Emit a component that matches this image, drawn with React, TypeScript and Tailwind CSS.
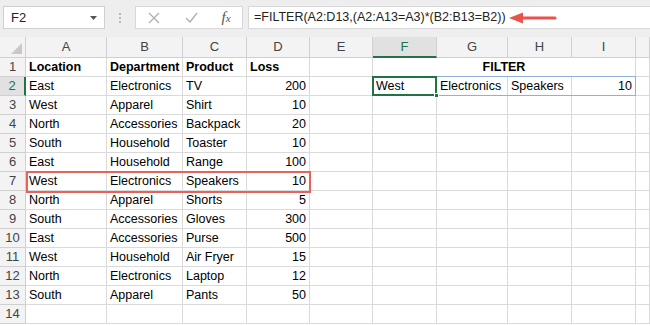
import React from 'react';

const cols = ['A', 'B', 'C', 'D', 'E', 'F', 'G', 'H', 'I', ''];

const data: (string | number)[][] = [
  ['East', 'Electronics', 'TV', 200],
  ['West', 'Apparel', 'Shirt', 10],
  ['North', 'Accessories', 'Backpack', 20],
  ['South', 'Household', 'Toaster', 10],
  ['East', 'Household', 'Range', 100],
  ['West', 'Electronics', 'Speakers', 10],
  ['North', 'Apparel', 'Shorts', 5],
  ['South', 'Accessories', 'Gloves', 300],
  ['East', 'Accessories', 'Purse', 500],
  ['West', 'Household', 'Air Fryer', 15],
  ['North', 'Electronics', 'Laptop', 12],
  ['South', 'Apparel', 'Pants', 50],
];

const cell = 'h-[19px] border-r border-b border-[#dadada] flex items-center px-[3px] whitespace-nowrap overflow-hidden';
const rowHead = 'h-[19px] border-r border-b border-[#d0d0d0] bg-[#f3f3f3] flex items-center justify-center text-[#444] text-[13px]';

function Row({ n, vals, bold }: { n: number; vals: (string | number | null)[]; bold?: boolean }) {
  return (
    <>
      <div className={n === 2 ? 'h-[19px] border-r-2 border-r-[#217346] border-b border-[#d0d0d0] bg-[#e1e1e1] flex items-center justify-center text-[#217346] text-[13px]' : rowHead}>{n}</div>
      {vals.map((v, i) => (
        <div key={i} className={`${cell} ${typeof v === 'number' ? 'justify-end' : ''} ${bold ? 'font-bold' : ''}`}>{v}</div>
      ))}
    </>
  );
}

export default function App() {
  return (
    <div className="w-[650px] h-[326px] overflow-hidden bg-white text-black" style={{ fontFamily: '"Liberation Sans", Arial, sans-serif' }}>
      {/* formula bar */}
      <div className="relative h-[37px] bg-[#eeeeee] flex items-start pt-[6px] pl-[3px]">
        <div className="w-[102px] h-[23px] bg-white border border-[#d0d0d0] flex items-center justify-between px-[7px] text-[13px] text-[#222]">
          <span>F2</span>
          <svg width="7" height="4" viewBox="0 0 7 4"><path d="M0 0h7L3.5 4z" fill="#555" /></svg>
        </div>
        <div className="w-[30px] h-[23px] flex flex-col items-center justify-center gap-[2px]">
          <span className="w-[2px] h-[2px] bg-[#b8b8b8]" />
          <span className="w-[2px] h-[2px] bg-[#b8b8b8]" />
          <span className="w-[2px] h-[2px] bg-[#b8b8b8]" />
        </div>
        <div className="w-[108px] h-[23px] bg-white border border-[#d8d8d8] flex items-center">
          <div className="w-[36px] flex justify-center">
            <svg width="12" height="12" viewBox="0 0 12 12"><path d="M1 1l10 10M11 1L1 11" stroke="#b0b0b0" strokeWidth="1.3" /></svg>
          </div>
          <div className="w-[38px] flex justify-center">
            <svg width="13" height="11" viewBox="0 0 13 11"><path d="M1 6l4 4 7-9" stroke="#b0b0b0" strokeWidth="1.4" fill="none" /></svg>
          </div>
          <div className="flex-1 flex justify-center italic text-[#555] text-[15px]" style={{ fontFamily: '"Liberation Serif", serif' }}>
            f<span className="text-[11px] mt-[4px]">x</span>
          </div>
        </div>
        <div className="ml-[5px] flex-1 h-[23px] bg-white border-l border-y border-[#d8d8d8] flex items-center pl-[5px] text-[12.5px] text-[#222]">
          =FILTER(A2:D13,(A2:A13=A3)*(B2:B13=B2))
        </div>
        <svg className="absolute left-[508px] top-[11px]" width="50" height="14" viewBox="0 0 50 14">
          <path d="M14 7H47" stroke="#e8534a" strokeWidth="3.2" strokeLinecap="round" />
          <path d="M1 7L15 1.5V12.5Z" fill="#e8534a" />
        </svg>
      </div>

      {/* grid */}
      <div className="relative">
        <div className="grid grid-cols-[26px_81px_76px_64px_63px_63px_64px_71px_64px_64px_1fr] text-[12.5px]">
          <div className="h-[21px] border-r border-b border-[#d0d0d0] bg-[#f3f3f3] relative">
            <svg className="absolute right-[3px] bottom-[3px]" width="11" height="11" viewBox="0 0 11 11"><path d="M11 0V11H0Z" fill="#c8c8c8" /></svg>
          </div>
          {cols.map((c, i) => (
            <div
              key={i}
              className={
                c === 'F'
                  ? 'h-[21px] border-r border-[#d0d0d0] border-b-2 border-b-[#217346] bg-[#e1e1e1] flex items-center justify-center text-[#217346] text-[13px]'
                  : 'h-[21px] border-r border-b border-[#d0d0d0] bg-[#f3f3f3] flex items-center justify-center text-[#444] text-[13px]'
              }
            >
              {c}
            </div>
          ))}

          {/* row 1 */}
          <div className={rowHead}>1</div>
          {['Location', 'Department', 'Product', 'Loss', ''].map((v, i) => (
            <div key={i} className={`${cell} font-bold`}>{v}</div>
          ))}
          <div className={`${cell} col-span-4 justify-center font-bold`}>FILTER</div>
          <div className={cell} />

          {data.map((r, i) => {
            const extra: (string | number | null)[] =
              i === 0 ? ['', 'West', 'Electronics', 'Speakers', 10, ''] : ['', '', '', '', '', ''];
            return <Row key={i} n={i + 2} vals={[...r, ...extra]} />;
          })}
          <Row n={14} vals={['', '', '', '', '', '', '', '', '', '']} />
        </div>

        {/* highlight around row 7 */}
        <div className="absolute left-[26px] top-[134px] w-[285px] h-[22px] border-2 border-[#e8625a]" />
        {/* spill range */}
        <div className="absolute left-[372px] top-[39px] w-[264px] h-[20px] border border-[#8fb0dc]" />
        {/* active cell */}
        <div className="absolute left-[372px] top-[39px] w-[65px] h-[20px] border-2 border-[#217346]" />
        <div className="absolute left-[434px] top-[56px] w-[5px] h-[5px] bg-[#217346] border border-white" />
      </div>
    </div>
  );
}
